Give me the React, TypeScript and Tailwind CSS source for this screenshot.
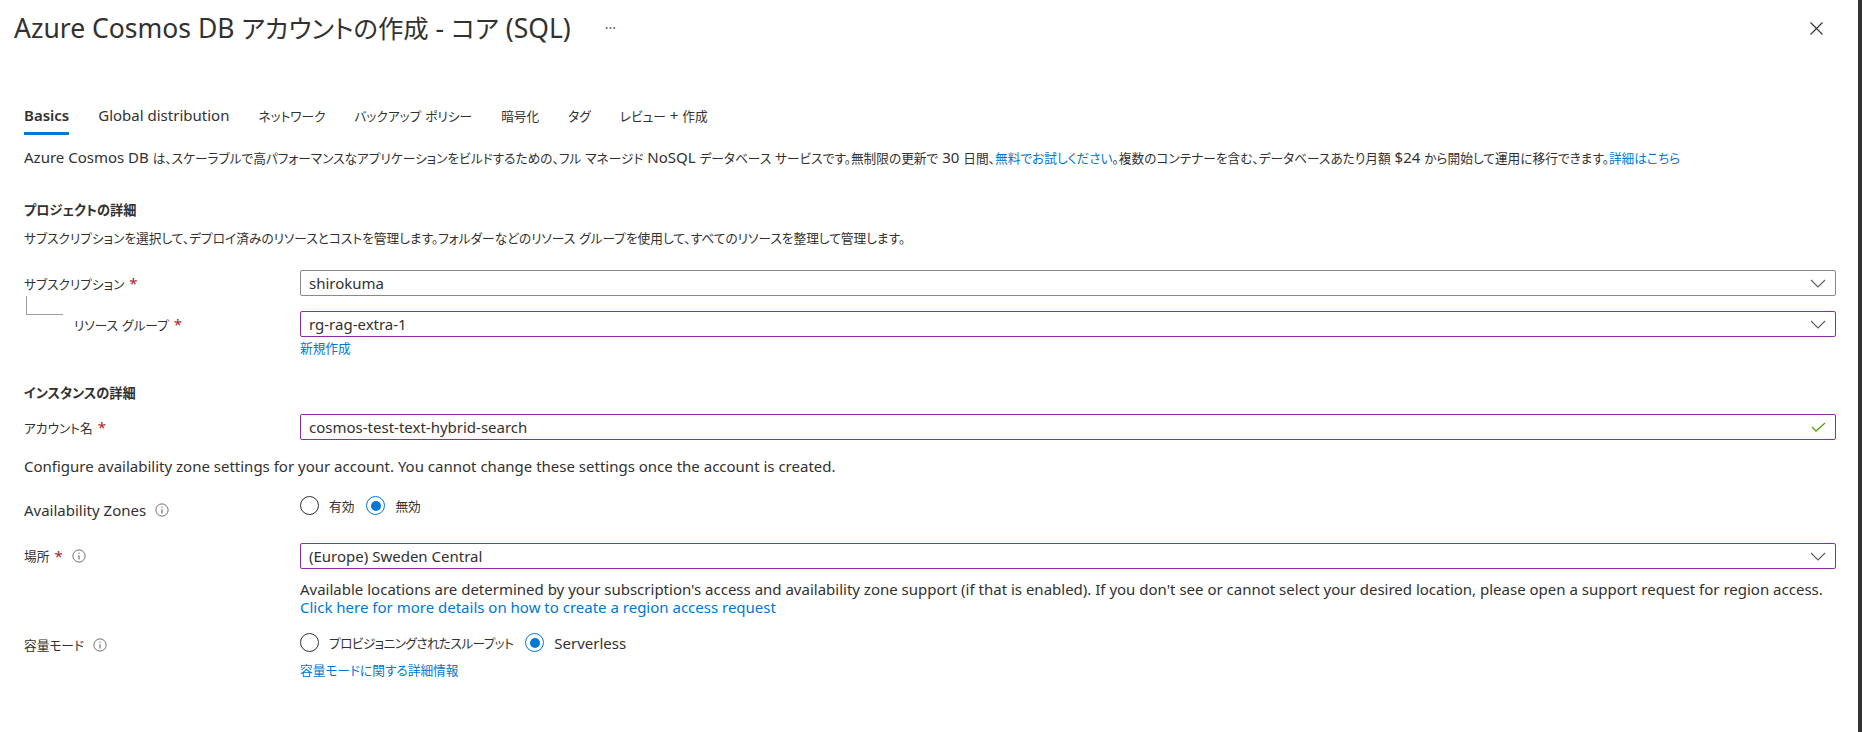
import type { ReactNode } from 'react'

// Azure portal - Cosmos DB 作成フォーム (Basics タブ)

const font = "font-['Noto_Sans','Noto_Sans_CJK_JP',sans-serif] [font-feature-settings:'palt']"

const CJK = /([\u3000-\u303f\u3040-\u30ff\u4e00-\u9fff\uff00-\uffef]+)/

// 和文部分だけ少し小さくして、ポータルの和文フォントの字幅に寄せる
function jp(text: string, cls = 'text-[12.7px]'): ReactNode[] {
  return text.split(CJK).map((part, i) =>
    CJK.test(part) ? (
      <span key={i} className={cls}>
        {part}
      </span>
    ) : (
      part
    )
  )
}

const tabs = ['Basics', 'Global distribution', 'ネットワーク', 'バックアップ ポリシー', '暗号化', 'タグ', 'レビュー + 作成']

function Required() {
  return <span className="ml-[5px] text-[#a4262c]">*</span>
}

function InfoIcon() {
  return (
    <svg className="ml-[9px] h-[14px] w-[14px] text-[#605e5c]" viewBox="0 0 16 16" fill="none" stroke="currentColor">
      <circle cx="8" cy="8" r="7" strokeWidth="1" />
      <path d="M8 7v5" strokeWidth="1.2" />
      <circle cx="8" cy="4.8" r="0.7" fill="currentColor" stroke="none" />
    </svg>
  )
}

function Chevron() {
  return (
    <svg className="h-[9px] w-[16px] text-[#605e5c]" viewBox="0 0 16 9" fill="none" stroke="currentColor" strokeWidth="1.1">
      <path d="M1 1l7 7 7-7" />
    </svg>
  )
}

function CheckMark() {
  return (
    <svg className="h-[10px] w-[15px] text-[#57a300]" viewBox="0 0 15 10" fill="none" stroke="currentColor" strokeWidth="1.3">
      <path d="M1 5l4 4 9-8" />
    </svg>
  )
}

function Radio({ label, checked, tight }: { label: string; checked?: boolean; tight?: boolean }) {
  return (
    <div className="flex items-center">
      <div
        className={`flex h-[19px] w-[19px] items-center justify-center rounded-full border ${
          checked ? 'border-[#0078d4]' : 'border-[#323130]'
        }`}
      >
        {checked && <div className="h-[10px] w-[10px] rounded-full bg-[#0078d4]" />}
      </div>
      <span className={`ml-[10px] ${tight ? 'tracking-[-0.6px]' : ''}`}>{jp(label)}</span>
    </div>
  )
}

function Field({ value, modified, valid }: { value: string; modified?: boolean; valid?: boolean }) {
  return (
    <div
      className={`flex h-[26px] w-full items-center justify-between rounded-[2px] border pl-[8px] pr-[9px] ${
        modified ? 'border-[#8a2da5]' : 'border-[#8a8886]'
      }`}
    >
      <span>{value}</span>
      {valid ? <CheckMark /> : <Chevron />}
    </div>
  )
}

function Row({ label, children, className = '' }: { label: ReactNode; children: ReactNode; className?: string }) {
  return (
    <div className={`flex ${className}`}>
      <div className="flex w-[276px] shrink-0 items-center">{label}</div>
      <div className="flex-1">{children}</div>
    </div>
  )
}

export default function App() {
  return (
    <div className={`${font} flex h-[732px] w-full bg-white text-[15px] leading-[20px] text-[#323130]`}>
      <div className="flex-1 pl-[24px] pr-[22px]">
        {/* ヘッダー */}
        <div className="flex h-[56px] items-center">
          <h1 className="ml-[-10px] text-[26.5px] leading-[36px]">
            {jp('Azure Cosmos DB アカウントの作成 - コア (SQL)', 'text-[25.4px]')}
          </h1>
          <span className="ml-[34px] text-[14px] text-[#605e5c]">···</span>
          <svg className="ml-auto mr-[13px] h-[13px] w-[13px] text-[#323130]" viewBox="0 0 13 13" stroke="currentColor" strokeWidth="1.1">
            <path d="M0.5 0.5l12 12M12.5 0.5l-12 12" />
          </svg>
        </div>

        {/* タブ */}
        <div className="mt-[49px] flex gap-[29px]">
          {tabs.map((t, i) => (
            <div key={t} className="flex flex-col">
              <span className={i === 0 ? 'font-semibold' : ''}>{jp(t)}</span>
              <div className={`mt-[7px] h-[3px] ${i === 0 ? 'bg-[#0078d4]' : ''}`} />
            </div>
          ))}
        </div>

        <p className="mt-[11px]">
          {jp('Azure Cosmos DB は、スケーラブルで高パフォーマンスなアプリケーションをビルドするための、フル マネージド NoSQL データベース サービスです。無制限の更新で 30 日間、')}
          <span className="text-[#0078d4]">{jp('無料でお試しください')}</span>
          {jp('。複数のコンテナーを含む、データベースあたり月額 $24 から開始して運用に移行できます。')}
          <span className="text-[#0078d4]">{jp('詳細はこちら')}</span>
        </p>

        {/* プロジェクトの詳細 */}
        <h2 className="mt-[31px] font-semibold">{jp('プロジェクトの詳細', 'text-[13.2px]')}</h2>
        <p className="mt-[7px]">
          {jp('サブスクリプションを選択して、デプロイ済みのリソースとコストを管理します。フォルダーなどのリソース グループを使用して、すべてのリソースを整理して管理します。')}
        </p>

        <Row
          className="mt-[22px]"
          label={
            <span>
              {jp('サブスクリプション')}
              <Required />
            </span>
          }
        >
          <Field value="shirokuma" />
        </Row>
        <div className="mt-[15px] flex">
          <div className="flex w-[276px] shrink-0 items-start">
            <div className="ml-[2px] mt-[-15px] h-[19px] w-[37px] border-b border-l border-[#a19f9d]" />
            <span className="ml-[11px] mt-[3px]">
              {jp('リソース グループ')}
              <Required />
            </span>
          </div>
          <div className="flex-1">
            <Field value="rg-rag-extra-1" modified />
            <div className="text-[#0078d4]">{jp('新規作成')}</div>
          </div>
        </div>

        {/* インスタンスの詳細 */}
        <h2 className="mt-[24px] font-semibold">{jp('インスタンスの詳細', 'text-[13.2px]')}</h2>
        <Row
          className="mt-[11px]"
          label={
            <span>
              {jp('アカウント名')}
              <Required />
            </span>
          }
        >
          <Field value="cosmos-test-text-hybrid-search" modified valid />
        </Row>
        <p className="mt-[16px]">
          Configure availability zone settings for your account. You cannot change these settings once the account is created.
        </p>

        <Row
          className="mt-[19px]"
          label={
            <span className="mt-[5px] flex items-center">
              Availability Zones
              <InfoIcon />
            </span>
          }
        >
          <div className="flex gap-[12px]">
            <Radio label="有効" />
            <Radio label="無効" checked />
          </div>
        </Row>

        <Row
          className="mt-[23px] items-start"
          label={
            <span className="mt-[3px] flex items-center">
              {jp('場所')}
              <Required />
              <InfoIcon />
            </span>
          }
        >
          <Field value="(Europe) Sweden Central" modified />
          <div className="mt-[11px] leading-[18px]">
            Available locations are determined by your subscription's access and availability zone support (if that is enabled). If you don't see or
            cannot select your desired location, please open a support request for region access.
          </div>
          <div className="leading-[18px] text-[#0078d4]">Click here for more details on how to create a region access request</div>
        </Row>

        <Row
          className="mt-[16px] items-start"
          label={
            <span className="mt-[3px] flex items-center">
              {jp('容量モード')}
              <InfoIcon />
            </span>
          }
        >
          <div className="flex gap-[12px]">
            <Radio label="プロビジョニングされたスループット" tight />
            <Radio label="Serverless" checked />
          </div>
          <div className="mt-[6px] text-[#0078d4]">{jp('容量モードに関する詳細情報')}</div>
        </Row>
      </div>
      <div className="w-[4px] shrink-0 bg-[#333333]" />
    </div>
  )
}
